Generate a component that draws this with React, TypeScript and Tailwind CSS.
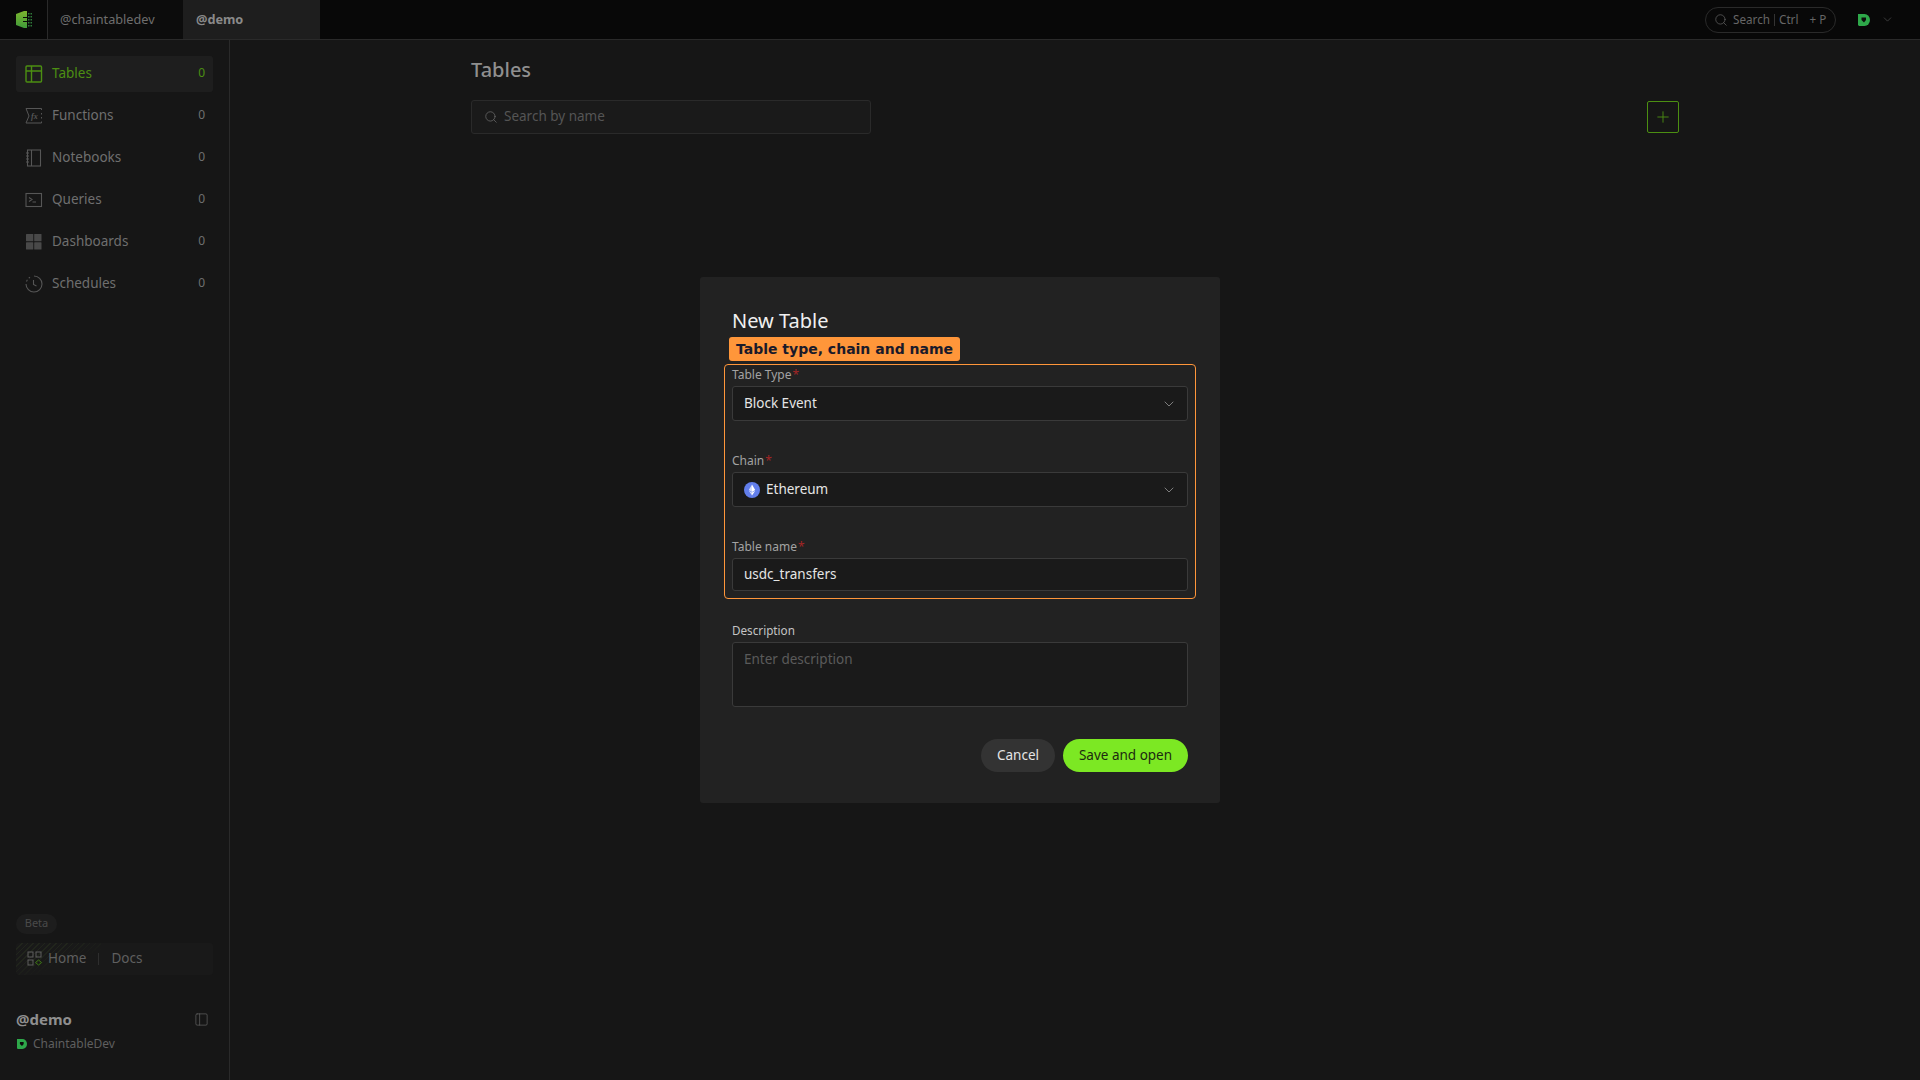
import { ChevronDown, PanelLeft, Plus, Search } from "lucide-react";
import type { ReactNode } from "react";

function TableIcon() {
  return (
    <svg width="18" height="18" viewBox="0 0 18 18" fill="none" stroke="currentColor" strokeWidth="1.4">
      <rect x="1" y="1" width="15.5" height="16" rx="1" />
      <path d="M1 6h15.5M6.5 1v16" />
    </svg>
  );
}

function FunctionIcon() {
  return (
    <svg width="18" height="18" viewBox="0 0 18 18" fill="none" stroke="currentColor" strokeWidth="1">
      <path d="M16.500 3V1.500H1l3 7.500-3 7h15.500V14.500M16.500 6v1.500M16.500 10v1.500" />
      <text x="6" y="12" fontSize="8" fontStyle="italic" fontWeight="700" fill="currentColor" stroke="none" fontFamily="Liberation Serif, serif">
        fx
      </text>
    </svg>
  );
}

function NotebookIcon() {
  return (
    <svg width="18" height="18" viewBox="0 0 18 18" fill="none" stroke="currentColor" strokeWidth="1.1">
      <rect x="2.500" y="1" width="13" height="16" />
      <path d="M6.500 1v16M1 4h3M1 7h3M1 10h3M1 13h3" />
    </svg>
  );
}

function QueryIcon() {
  return (
    <svg width="18" height="18" viewBox="0 0 18 18" fill="none" stroke="currentColor" strokeWidth="1.1">
      <rect x="1" y="2.500" width="15.500" height="13" />
      <path d="M4 6.500 7 8.500 4 10.500M7.500 11h3.500" />
    </svg>
  );
}

function DashboardIcon() {
  return (
    <svg width="18" height="18" viewBox="0 0 18 18" fill="currentColor" fillOpacity="0.8">
      <rect x="1" y="1" width="7.300" height="7.300" rx="0.5" />
      <rect x="9.200" y="1" width="7.300" height="7.300" rx="0.5" />
      <rect x="1" y="9.200" width="7.300" height="7.300" rx="0.5" />
      <rect x="9.200" y="9.200" width="7.300" height="7.300" rx="0.5" />
    </svg>
  );
}

function ClockIcon() {
  return (
    <svg width="18" height="18" viewBox="0 0 18 18" fill="none" stroke="currentColor" strokeWidth="1.1">
      <path d="M9 1a8 8 0 1 1-8 8" />
      <path d="M1.500 6.500A8 8 0 0 1 5 2.200" strokeDasharray="2 2" />
      <path d="M8.500 5v4.500l3 1.500" />
    </svg>
  );
}

function Logo() {
  return (
    <svg width="16" height="17" viewBox="0 0 16 17">
      <defs>
        <linearGradient id="logoFill" x1="0" y1="0" x2="0" y2="1">
          <stop offset="0" stopColor="#7cb52e" />
          <stop offset="1" stopColor="#3f9a3a" />
        </linearGradient>
      </defs>
      <path d="M0 3 8 0h3v6H7v1h4v3H7v1h4v6H8l-8-3z" fill="url(#logoFill)" />
      <g fill="#2f7a3a">
        <rect x="12" y="2" width="1.500" height="1.500" />
        <rect x="14.500" y="2" width="1.500" height="1.500" />
        <rect x="12" y="5" width="1.500" height="1.500" />
        <rect x="14.500" y="5" width="1.500" height="1.500" />
        <rect x="12" y="8" width="1.500" height="1.500" />
        <rect x="14.500" y="8" width="1.500" height="1.500" />
        <rect x="12" y="11" width="1.500" height="1.500" />
        <rect x="14.500" y="11" width="1.500" height="1.500" />
        <rect x="12" y="14" width="1.500" height="1.500" />
        <rect x="14.500" y="14" width="1.500" height="1.500" />
      </g>
    </svg>
  );
}

function Avatar({ size }: { size: number }) {
  return (
    <svg width={size} height={size} viewBox="0 0 12 12">
      <path d="M0 0h6.500a5.500 6 0 0 1 0 12H1l-1-1z" fill="#2ea84a" />
      <path d="M3.500 3.500h4.500v2.500L6 8.500 3.500 6z" fill="#0d0d0d" />
    </svg>
  );
}

function EthIcon() {
  return (
    <svg width="16" height="16" viewBox="0 0 16 16">
      <circle cx="8" cy="8" r="8" fill="#627eea" />
      <path d="M8 2.500 4.800 8 8 9.900z" fill="#fff" fillOpacity="0.75" />
      <path d="M8 2.500 11.200 8 8 9.900z" fill="#fff" />
      <path d="M8 10.600 4.800 8.700 8 13.500z" fill="#fff" fillOpacity="0.75" />
      <path d="M8 10.600 11.200 8.700 8 13.500z" fill="#fff" />
    </svg>
  );
}

const navItems: { label: string; icon: ReactNode; active?: boolean }[] = [
  { label: "Tables", icon: <TableIcon />, active: true },
  { label: "Functions", icon: <FunctionIcon /> },
  { label: "Notebooks", icon: <NotebookIcon /> },
  { label: "Queries", icon: <QueryIcon /> },
  { label: "Dashboards", icon: <DashboardIcon /> },
  { label: "Schedules", icon: <ClockIcon /> },
];

function FieldLabel({ text, required }: { text: string; required?: boolean }) {
  return (
    <label className="block h-[19px] text-[12px] leading-[16px] text-[#a3a3a3]">
      {text}
      {required && <span className="ml-px text-[#a32525]">*</span>}
    </label>
  );
}

function SelectBox({ children }: { children: ReactNode }) {
  return (
    <div className="flex h-[35px] items-center justify-between rounded-[3px] border border-[#3a3a3a] bg-[#1a1a1a] pl-[11px] pr-[10px] text-[13.500px] text-[#e5e5e5]">
      <div className="flex items-center gap-[6px]">{children}</div>
      <ChevronDown size={16} strokeWidth={1} className="text-[#b0b0b0]" />
    </div>
  );
}

export default function App() {
  return (
    <div className="relative flex h-screen w-full flex-col overflow-hidden bg-[#161616] font-['Noto_Sans',sans-serif] text-[#777]">
      <header className="flex h-[40px] shrink-0 items-stretch border-b border-[#2a2a2a] bg-[#080808]">
        <div className="flex w-[48px] items-center justify-center border-r border-[#2a2a2a]">
          <Logo />
        </div>
        <div className="flex w-[135px] items-center bg-[#0c0c0c] pl-[12px] text-[12.700px] text-[#6e6e6e]">@chaintabledev</div>
        <div className="flex w-[137px] items-center bg-[#1e1e1e] pl-[13px] text-[12.700px] font-bold text-[#8a8a8a]">@demo</div>
        <div className="ml-auto flex items-center pr-[26px]">
          <div className="mr-[22px] flex h-[26px] w-[131px] items-center rounded-full border border-[#2a2a2a] pl-[8px] text-[11.700px] text-[#666]">
            <Search size={14} strokeWidth={1.2} className="mr-[5px]" />
            <span>Search</span>
            <span className="mx-[4px] h-[12px] w-px bg-[#333]" />
            <span>Ctrl</span>
            <span className="ml-[11px]">+ P</span>
          </div>
          <Avatar size={12} />
          <ChevronDown size={13} strokeWidth={1} className="ml-[11px] text-[#666]" />
        </div>
      </header>

      <div className="flex min-h-0 flex-1">
        <aside className="flex w-[230px] shrink-0 flex-col border-r border-[#2a2a2a] px-[16px] pt-[16px] pb-[27px]">
          <nav className="flex flex-col gap-[6px]">
            {navItems.map((item) => (
              <div
                key={item.label}
                className={`flex h-[36px] items-center rounded-[3px] pl-[9px] pr-[8px] text-[13.500px] ${
                  item.active ? "bg-[#1e1e1e] text-[#4c8f12]" : "text-[#6f6f6f]"
                }`}
              >
                <span className={`mr-[9px] flex w-[18px] justify-center ${item.active ? "" : "text-[#565656]"}`}>{item.icon}</span>
                <span className="pb-[2px]">{item.label}</span>
                <span className="ml-auto pb-[2px] text-[12px]">0</span>
              </div>
            ))}
          </nav>

          <div className="mt-auto">
            <span className="flex h-[20px] w-[41px] items-center justify-center rounded-full bg-[#1d1d1d] text-[11px] text-[#4a4a4a]">Beta</span>
            <div className="relative mt-[9px] flex h-[32px] items-center overflow-hidden rounded-[3px] bg-[#191919] pl-[11px] text-[13.500px] text-[#5f5f5f]">
              <span className="absolute inset-y-0 left-0 w-[85px] bg-[repeating-linear-gradient(135deg,#2a3320_0,#2a3320_1px,transparent_1px,transparent_4px)] opacity-50 [mask-image:linear-gradient(to_bottom_right,black_30%,transparent_65%)]" />
              <svg width="15" height="15" viewBox="0 0 15 15" fill="none" stroke="currentColor" className="relative">
                <rect x="1" y="1" width="5" height="5" />
                <rect x="9" y="1" width="5" height="5" />
                <rect x="1" y="9" width="5" height="5" />
                <path d="M11.500 9 14.500 11.500 11.500 14 8.500 11.500z" stroke="#3f7a14" />
              </svg>
              <span className="relative ml-[6px]">Home</span>
              <span className="relative mx-[12px] h-[12px] w-px bg-[#2e2e2e]" />
              <span className="relative">Docs</span>
            </div>
            <div className="mt-[33px] flex items-center justify-between pr-[4px]">
              <span className="text-[15px] font-bold text-[#8f8f8f]">@demo</span>
              <PanelLeft size={15} strokeWidth={1.2} className="mt-[2px] text-[#5f5f5f]" />
            </div>
            <div className="mt-[5px] flex items-center gap-[6px] pl-[1px] text-[12px] text-[#5f5f5f]">
              <Avatar size={10} />
              <span>ChaintableDev</span>
            </div>
          </div>
        </aside>

        <main className="flex-1 pl-[241px] pr-[241px] pt-[15px]">
          <h1 className="text-[20px] font-medium leading-[30px] text-[#8f8f8f]">Tables</h1>
          <div className="mt-[15px] flex items-center justify-between">
            <div className="flex h-[34px] w-[400px] items-center rounded-[3px] border border-[#2a2a2a] bg-[#1a1a1a] pl-[12px] text-[13.500px] text-[#555]">
              <Search size={14} strokeWidth={1.3} className="mr-[6px] text-[#6a6a6a]" />
              <span className="pb-[1px]">Search by name</span>
            </div>
            <button className="flex h-[32px] w-[32px] items-center justify-center rounded-[2px] border border-[#4c8f12] text-[#4c8f12]">
              <Plus size={18} strokeWidth={1.2} />
            </button>
          </div>
        </main>
      </div>

      <div className="fixed inset-0 flex items-center justify-center">
        <div className="h-[526px] w-[520px] rounded-[3px] bg-[#222222] px-[32px] pt-[30px]">
          <h2 className="text-[20px] leading-[28px] text-[#f0f0f0]">New Table</h2>
          <div className="relative">
            <div className="absolute left-[-3px] top-[2px] flex h-[24px] w-[231px] items-center justify-center whitespace-nowrap rounded-[3px] bg-[#ff963a] font-['DejaVu_Sans',sans-serif] text-[14px] font-bold text-[#1a1a2a]">
              Table type, chain and name
            </div>
          </div>
          <div className="relative mt-[32px]">
            <span className="pointer-events-none absolute inset-x-[-8px] top-[-3px] h-[235px] rounded-[4px] border border-[#ff963a]" />
            <FieldLabel text="Table Type" required />
            <SelectBox>Block Event</SelectBox>
            <div className="mt-[32px]">
              <FieldLabel text="Chain" required />
              <SelectBox>
                <EthIcon />
                Ethereum
              </SelectBox>
            </div>
            <div className="mt-[32px]">
              <FieldLabel text="Table name" required />
              <div className="flex h-[33px] items-center rounded-[3px] border border-[#3a3a3a] bg-[#1a1a1a] pl-[11px] text-[13.500px] text-[#e5e5e5]">usdc_transfers</div>
            </div>
            <div className="mt-[31px]">
              <label className="block h-[20px] text-[11.700px] leading-[16px] text-[#c4c4c4]">Description</label>
              <div className="h-[65px] rounded-[3px] border border-[#3a3a3a] bg-[#1a1a1a] pl-[11px] pt-[6px] text-[13.500px] text-[#5a5a5a]">Enter description</div>
            </div>
          </div>
          <div className="mt-[32px] flex justify-end gap-[8px]">
            <button className="h-[33px] w-[74px] rounded-full bg-[#333333] text-[13.500px] text-[#e5e5e5]">Cancel</button>
            <button className="h-[33px] w-[125px] rounded-full bg-[#7ce823] text-[13.500px] text-[#1c2a10]">Save and open</button>
          </div>
        </div>
      </div>
    </div>
  );
}
